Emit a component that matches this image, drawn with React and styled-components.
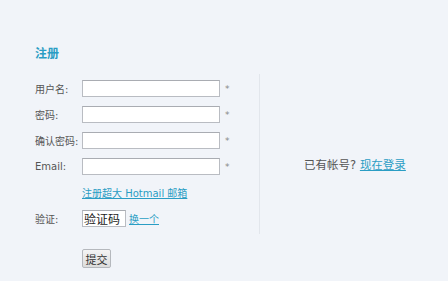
import styled, { createGlobalStyle } from 'styled-components'

const FONT = '"DejaVu Sans", "Noto Sans CJK SC", sans-serif'

const Global = createGlobalStyle`
  html, body {
    margin: 0;
    padding: 0;
    background: #f1f4f9;
  }
  body {
    font-family: ${FONT};
    font-size: 10px;
    color: #444;
  }
`

const Page = styled.div`
  display: flex;
  width: 448px;
  height: 281px;
  padding: 46px 0 0 35px;
  box-sizing: border-box;
`

const FormCol = styled.div`
  width: 224px;
  display: flex;
  flex-direction: column;
`

const Title = styled.h2`
  margin: 0 0 18px;
  font-size: 12px;
  font-weight: bold;
  color: #2a9dc4;
  line-height: 16px;
`

const Row = styled.div`
  display: flex;
  align-items: center;
  height: 17px;
  margin-bottom: ${(p) => p.gap || 9}px;
`

const Label = styled.label`
  width: 47px;
  flex: none;
  color: #555;
  white-space: nowrap;
`

const Input = styled.input`
  box-sizing: border-box;
  width: ${(p) => p.w || 138}px;
  height: 17px;
  margin: 0;
  padding: 0 1px;
  border: 1px solid #b9bcc2;
  border-top-color: #a9acb2;
  background: #fff;
  font-family: ${FONT};
  font-size: 12px;
  color: #222;
  outline: none;
`

const Star = styled.span`
  margin-left: 5px;
  font-size: 9px;
  color: #888;
`

const Link = styled.a`
  color: #2a9dc4;
  text-decoration: underline;
  cursor: pointer;
  margin-left: ${(p) => p.ml || 0}px;
`

const Indent = styled.div`
  padding-left: 47px;
  height: 17px;
  display: flex;
  align-items: center;
  margin-bottom: ${(p) => p.gap || 0}px;
`

const Button = styled.button`
  width: 29px;
  height: 19px;
  margin: 0;
  padding: 0;
  border: 1px solid #b5b8bd;
  border-radius: 2px;
  background: linear-gradient(#f4f4f4, #dcdcdc);
  font-family: ${FONT};
  font-size: 11px;
  color: #333;
`

const Divider = styled.div`
  width: 1px;
  align-self: flex-start;
  margin-top: 28px;
  height: 160px;
  background: #e2e6ec;
`

const Side = styled.div`
  flex: 1;
  display: flex;
  align-items: center;
  justify-content: center;
  padding-left: 2px;
  color: #555;
  font-size: 11.5px;
  white-space: pre;
`

export default function App() {
  return (
    <Page>
      <Global />
      <FormCol>
        <Title>注册</Title>
        <Row>
          <Label>用户名:</Label>
          <Input />
          <Star>*</Star>
        </Row>
        <Row>
          <Label>密码:</Label>
          <Input type="password" />
          <Star>*</Star>
        </Row>
        <Row>
          <Label>确认密码:</Label>
          <Input type="password" />
          <Star>*</Star>
        </Row>
        <Row gap={9}>
          <Label>Email:</Label>
          <Input />
          <Star>*</Star>
        </Row>
        <Indent gap={9}>
          <Link>注册超大 Hotmail 邮箱</Link>
        </Indent>
        <Row gap={23}>
          <Label>验证:</Label>
          <Input w={44} defaultValue="验证码" />
          <Link ml={3}>换一个</Link>
        </Row>
        <Indent>
          <Button>提交</Button>
        </Indent>
      </FormCol>
      <Divider />
      <Side>
        {'已有帐号? '}<Link>现在登录</Link>
      </Side>
    </Page>
  )
}
